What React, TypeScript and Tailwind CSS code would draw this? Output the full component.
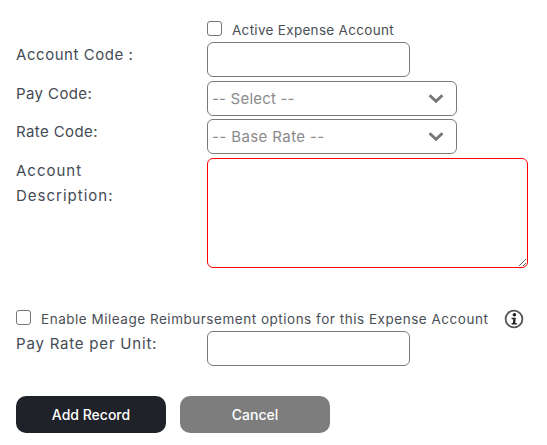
import React from 'react';

const labelCls = "w-[191px] text-[15px] leading-[25px] text-[#454b55]";
const boxCls = "block h-[35px] rounded-[6px] border border-[#7a7a7a] bg-white outline-none";
const checkCls = "m-0 block h-[15px] w-[15px] appearance-none rounded-[3px] border border-[#767676] bg-white";

const Chevron: React.FC = () => (
  <svg viewBox="0 0 18 12" className="pointer-events-none absolute right-[12px] top-[12px] h-[11px] w-[18px]">
    <path d="M2 2.5 L9 9 L16 2.5" fill="none" stroke="#757575" strokeWidth="3.2" />
  </svg>
);

const SelectBox: React.FC<{ text: string; spacing: string }> = ({ text, spacing }) => (
  <div className="relative w-[250px]">
    <select className={`${boxCls} ${spacing} w-full appearance-none pl-[4px] pt-[2px] text-[15px] text-[#8a8a8a]`}>
      <option>{text}</option>
    </select>
    <Chevron />
  </div>
);

const App: React.FC = () => {
  return (
    <div className="h-[445px] w-[547px] overflow-hidden bg-white pl-[16px] pt-[20px] font-['Inter',sans-serif]">
      <div className="ml-[191px] flex h-[16px] items-center">
        <input type="checkbox" className={checkCls} />
        <span className="ml-[10px] mt-[5px] text-[13.5px] tracking-[0.3px] text-[#4a4f57]">Active Expense Account</span>
      </div>

      <div className="mt-[6px] flex flex-col gap-[4px]">
        <div className="flex">
          <label className={`${labelCls} tracking-[0.55px]`}>Account Code :</label>
          <input type="text" className={`${boxCls} w-[203px]`} />
        </div>
        <div className="flex">
          <label className={`${labelCls} tracking-[0.4px]`}>Pay Code:</label>
          <SelectBox text="-- Select --" spacing="tracking-[0.2px]" />
        </div>
        <div className="-mt-[1px] flex">
          <label className={`${labelCls} tracking-[0.4px]`}>Rate Code:</label>
          <SelectBox text="-- Base Rate --" spacing="tracking-[0.4px]" />
        </div>
        <div className="flex">
          <label className={`${labelCls} tracking-[1px]`}>Account<br />Description:</label>
          <textarea className="block h-[110px] w-[321px] rounded-[6px] border border-[#ff0000] bg-white outline-none" />
        </div>
      </div>

      <div className="mt-[41px] flex h-[16px] items-center">
        <input type="checkbox" className={checkCls} />
        <span className="ml-[10px] mt-[5px] whitespace-nowrap text-[13.5px] tracking-[0.52px] text-[#4a4f57]">Enable Mileage Reimbursement options for this Expense Account</span>
        <svg viewBox="0 0 20 20" className="ml-[16px] mt-[4px] h-[20px] w-[20px] shrink-0">
          <circle cx="10" cy="10" r="8.4" fill="none" stroke="#555" strokeWidth="1.8" />
          <circle cx="10.4" cy="5.8" r="1.8" fill="#222" />
          <path d="M7.6 8.8 H11.8 L11.2 14 H12.8 V15.4 H7.6 V14 H8.9 L9.3 10.2 H7.6 Z" fill="#222" />
        </svg>
      </div>

      <div className="mt-[6px] flex">
        <label className={`${labelCls} tracking-[0.8px]`}>Pay Rate per Unit:</label>
        <input type="text" className={`${boxCls} w-[203px]`} />
      </div>

      <div className="mt-[30px] flex gap-[14px]">
        <button className="h-[37px] w-[150px] rounded-[10px] bg-[#1f2228] text-[14px] font-medium text-white">Add Record</button>
        <button className="h-[37px] w-[150px] rounded-[10px] bg-[#7d7d7d] text-[14px] font-medium text-white">Cancel</button>
      </div>
    </div>
  );
};

export default App;
